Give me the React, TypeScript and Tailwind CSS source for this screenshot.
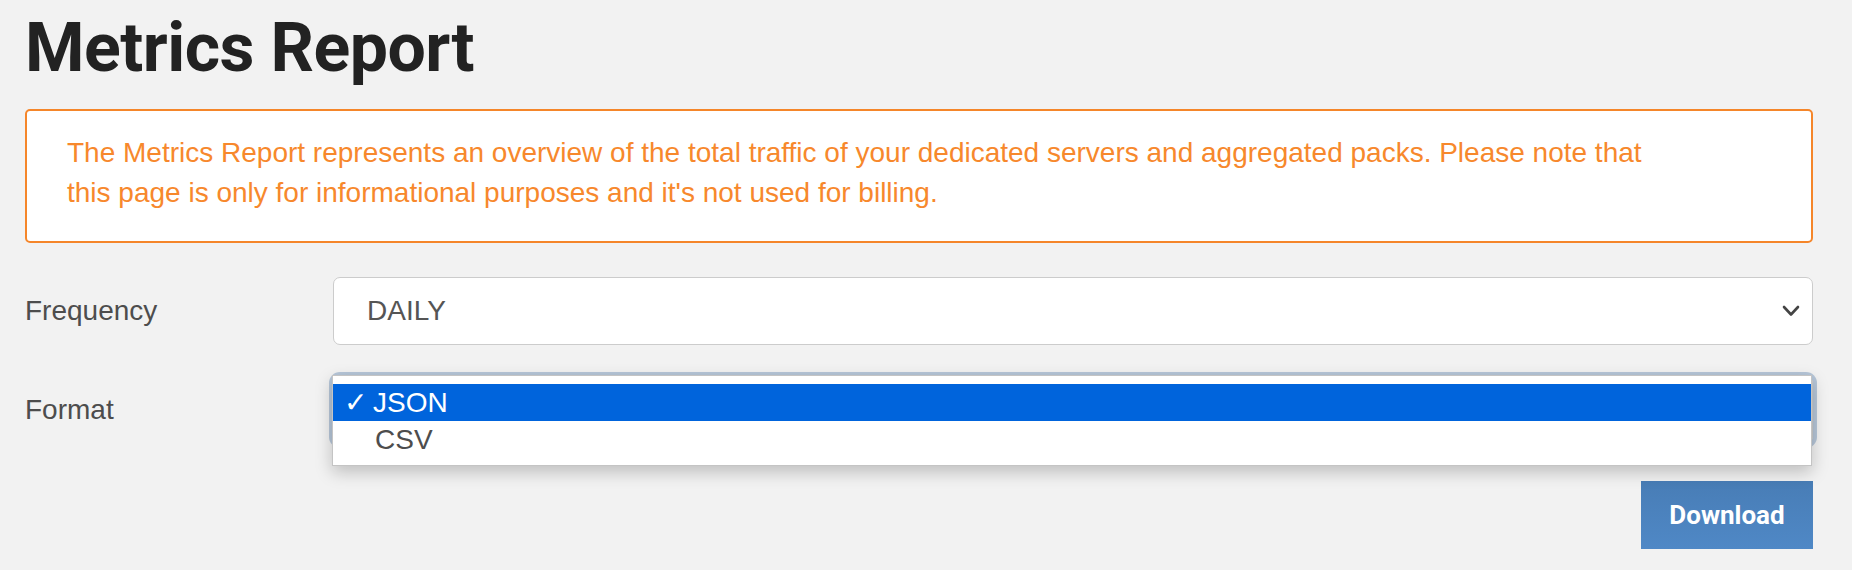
import React from "react"

const Chevron = () => (
  <svg width="18" height="12" viewBox="0 0 18 12" fill="none">
    <polyline points="2,2 9,9.5 16,2" stroke="#444" strokeWidth="2.6" strokeLinecap="round" strokeLinejoin="round" />
  </svg>
)

export default function App() {
  return (
    <div className="min-h-[570px] bg-[#f2f2f2] pl-[25px] pr-[39px] pt-[14px] font-['Liberation_Sans',Arial,sans-serif]">
      <h1 className="text-[68px] leading-none font-bold tracking-[-0.5px] text-[#222] font-['Roboto',sans-serif]">
        Metrics Report
      </h1>

      <div className="mt-[27px] rounded-[5px] border-2 border-[#f5862a] bg-white pl-[40px] pt-[22px] pb-[28px] text-[28px] leading-[40px] text-[#f7882c]">
        The Metrics Report represents an overview of the total traffic of your dedicated servers and aggregated packs. Please note that
        <br />
        this page is only for informational purposes and it's not used for billing.
      </div>

      <div className="mt-[34px] flex items-center">
        <label className="w-[308px] text-[28px] text-[#4d4d4d]">Frequency</label>
        <div className="flex h-[68px] flex-1 items-center justify-between rounded-[7px] border border-[#cccccc] bg-white pl-[33px] pr-[12px] text-[28px] text-[#555]">
          <span>DAILY</span>
          <Chevron />
        </div>
      </div>

      <div className="mt-[31px] flex items-center">
        <label className="w-[308px] text-[28px] text-[#4d4d4d]">Format</label>
        <div className="relative h-[68px] flex-1 rounded-[7px] border border-[#cccccc] bg-white shadow-[0_0_0_4px_#b6c6d8]">
          <div className="absolute left-[-2px] top-[-2px] right-0 z-10 h-[91px] border border-[#c4c4c4] bg-white pt-[8px] shadow-[0_6px_16px_rgba(0,0,0,0.22)]">
            <div className="flex h-[37px] items-center bg-[#0064dc] text-[28px] text-white">
              <span className="w-[40px] pl-[11px] font-['DejaVu_Sans',sans-serif] text-[28px] font-bold leading-none">✓</span>
              <span>JSON</span>
            </div>
            <div className="flex h-[37px] items-center pl-[42px] text-[28px] text-[#4d4d4d]">CSV</div>
          </div>
        </div>
      </div>

      <div className="mt-[37px] flex justify-end">
        <button className="h-[68px] w-[172px] bg-gradient-to-b from-[#487db6] to-[#4f88c6] text-[26px] font-bold text-white font-['Roboto',sans-serif]">
          Download
        </button>
      </div>
    </div>
  )
}
